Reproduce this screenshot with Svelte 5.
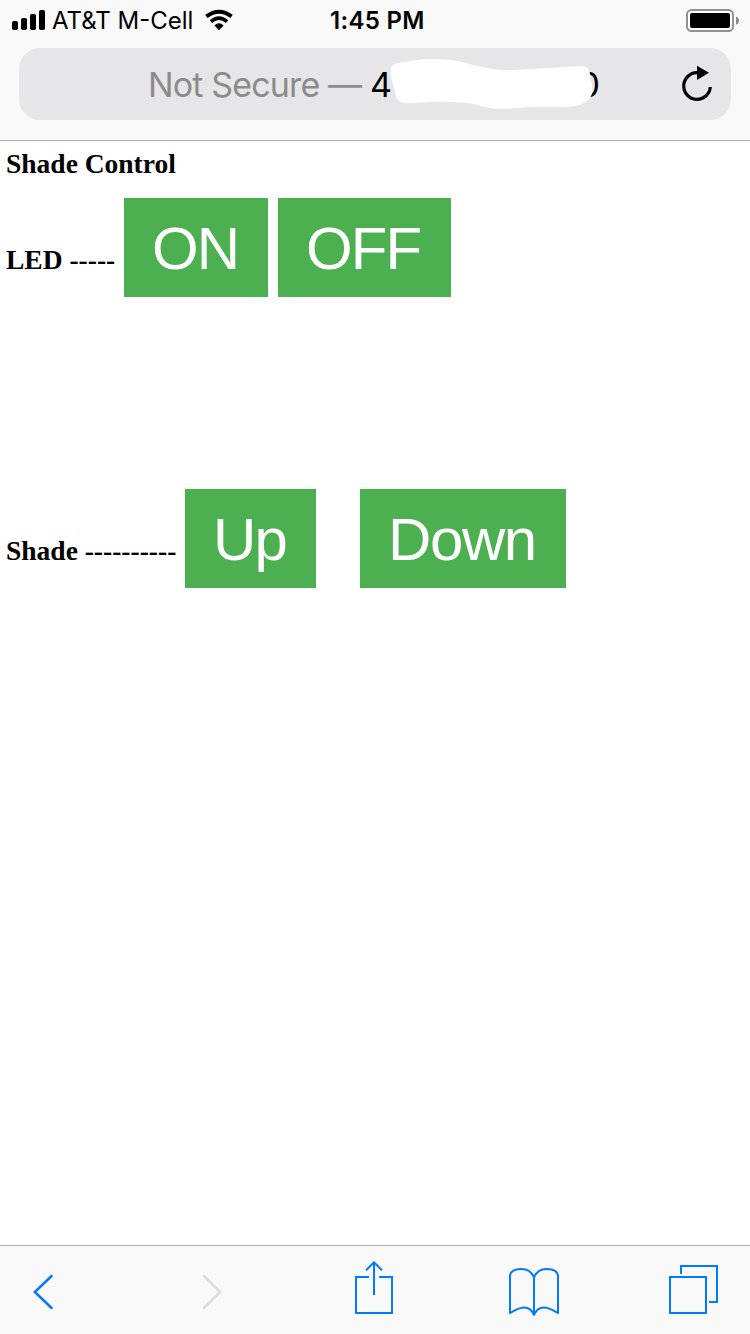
<script>
  const bars = [
    { x: 0, h: 9 },
    { x: 9, h: 12 },
    { x: 18, h: 16 },
    { x: 27, h: 20 },
  ];
</script>

<div class="screen">
  <header>
    <div class="status">
      <div class="carrier">
        <svg width="33" height="20" viewBox="0 0 33 20">
          {#each bars as b}
            <rect x={b.x} y={20 - b.h} width="6" height={b.h} rx="1.8" />
          {/each}
        </svg>
        <span class="network">AT&amp;T M-Cell</span>
        <svg class="wifi" width="30" height="22" viewBox="0 0 30 22">
          <path d="M2.4 7.4Q15-2.1 27.6 7.4" fill="none" stroke="#000" stroke-width="3.9" />
          <path d="M7 12.6Q15 5.8 23 12.6" fill="none" stroke="#000" stroke-width="3.7" />
          <path d="M15 21.2L10.4 16.6Q15 12 19.6 16.6Z" />
        </svg>
      </div>
      <time>1:45 PM</time>
      <svg class="battery" width="54" height="24" viewBox="0 0 54 24">
        <rect x="1" y="1" width="46" height="21" rx="4.5" fill="#fff" stroke="#929292" stroke-width="2" />
        <rect x="4" y="4" width="40" height="15" rx="2" />
        <path d="M50 7.8Q53 8.8 53 11.7T50 15.6Z" fill="#8b8b8b" />
      </svg>
    </div>
    <div class="address">
      <span class="insecure">Not Secure —</span>
      <span class="host"><span>4</span><span>0</span></span>
      <svg class="scribble" width="212" height="56" viewBox="390 56 212 56">
        <path d="M391 69C391 63 398 63 405 62C421 58 444 58 463 62C479 67 497 71 515 70C539 69 560 67 580 66C588 65 591 71 590 78C592 83 593 89 592 94C589 101 582 105 575 106C560 108 542 106 529 107C516 108 503 110 489 108C476 104 463 102 448 102C433 101 423 103 409 103C399 104 395 98 395 91C393 83 390 78 391 69Z" fill="#fff" />
      </svg>
      <svg class="reload" width="34" height="38" viewBox="680 65 34 38">
        <path d="M698 72.7H697A13.3 13.3 0 1 0 710.3 87" fill="none" stroke="#000" stroke-width="3.2" />
        <path d="M697 65.8L709 72.7L697 80Z" />
      </svg>
    </div>
  </header>

  <main>
    <h1>Shade Control</h1>
    <div class="row led">
      <b>LED -----</b>
      <button class="on">ON</button>
      <button class="off">OFF</button>
    </div>
    <div class="row shade">
      <b>Shade ----------</b>
      <button class="up">Up</button>
      <button class="down">Down</button>
    </div>
  </main>

  <nav>
    <svg viewBox="0 1246 750 88" width="750" height="88" fill="none" stroke="#007aff" stroke-width="2">
      <path d="M51.6 1276L34.8 1292L51.6 1308" stroke-width="2.5" stroke-linecap="round" />
      <path d="M203.8 1276L220.2 1292L203.8 1308" stroke="#dcdcdc" stroke-width="2.5" stroke-linecap="round" />
      <path d="M369 1277H356V1313H392V1277H379M374 1295V1263M366 1270.3L374 1262.4L382 1270.3" />
      <path d="M534 1277C531 1271 527 1269 521.5 1269C516 1269 511 1271 510 1275V1313C516 1310 519 1307.5 524 1307.5C529 1307.5 532 1310 534 1315C536 1310 539 1307.5 544 1307.5C549 1307.5 552 1310 558 1313V1275C557 1271 552 1269 546.5 1269C541 1269 537 1271 534 1277V1315" stroke-linejoin="round" />
      <path d="M670 1277H706V1313H670ZM681 1274V1266H717V1302H709" />
    </svg>
  </nav>
</div>

<style>
  :global(body) {
    margin: 0;
  }
  .screen {
    width: 750px;
    height: 1334px;
    display: flex;
    flex-direction: column;
    background: #fff;
    color: #000;
    overflow: hidden;
  }
  svg {
    display: block;
    flex: none;
  }
  header {
    box-sizing: border-box;
    height: 141px;
    background: #f9f9f9;
    border-bottom: 1px solid #aeaeae;
    font-family: Inter, "Liberation Sans", sans-serif;
  }
  .status {
    height: 48px;
    display: grid;
    grid-template-columns: 318px 1fr 64px;
    align-items: start;
  }
  .carrier {
    display: flex;
    padding: 10px 0 0 12px;
  }
  .network {
    font-size: 24px;
    line-height: 24px;
    margin: -1px 0 0 7px;
    width: 142px;
    letter-spacing: 0;
    white-space: nowrap;
  }
  .wifi {
    margin-left: 10px;
    margin-top: -1px;
  }
  time {
    font-size: 24px;
    line-height: 24px;
    font-weight: 600;
    padding: 9px 0 0 12px;
    letter-spacing: 0.3px;
    white-space: nowrap;
  }
  .battery {
    margin-top: 9px;
  }
  .address {
    position: relative;
    box-sizing: border-box;
    margin: 0 19px;
    height: 72px;
    padding-left: 129px;
    border-radius: 21px;
    background: #e6e6e8;
    display: flex;
    align-items: center;
    font-size: 34px;
    line-height: 40px;
  }
  .insecure {
    width: 222px;
    padding-top: 1px;
    color: #8b8b8d;
    white-space: nowrap;
    letter-spacing: -0.85px;
  }
  .host {
    width: 230px;
    padding-top: 1px;
    display: flex;
    justify-content: space-between;
  }
  .scribble {
    position: absolute;
    left: 371px;
    top: 8px;
  }
  .reload {
    margin-left: auto;
    margin-right: 17px;
  }
  main {
    flex: 1;
    padding: 7px 6px 0;
    font-family: "Liberation Serif", serif;
    font-size: 27.5px;
  }
  h1 {
    margin: 0;
    font-size: inherit;
    line-height: 32px;
  }
  .row {
    display: flex;
    align-items: baseline;
    line-height: 32px;
  }
  .led {
    margin-top: 18px;
  }
  .shade {
    margin-top: 192px;
  }
  b {
    flex: none;
    white-space: nowrap;
  }
  .led b {
    width: 118px;
  }
  .shade b {
    width: 179px;
  }
  button {
    box-sizing: border-box;
    height: 99px;
    border: 0;
    border-radius: 0;
    padding: 2px 0 0 28px;
    background: #4caf50;
    color: #fff;
    font: 60px/97px "Liberation Sans", sans-serif;
    letter-spacing: -1.9px;
    text-align: left;
    white-space: nowrap;
  }
  .on {
    width: 144px;
  }
  .off {
    width: 173px;
    margin-left: 10px;
  }
  .up {
    width: 131px;
  }
  .down {
    width: 206px;
    margin-left: 44px;
    letter-spacing: -1.4px;
  }
  nav {
    height: 88px;
    border-top: 1px solid #aeaeae;
    background: #f9f9f9;
  }
</style>
